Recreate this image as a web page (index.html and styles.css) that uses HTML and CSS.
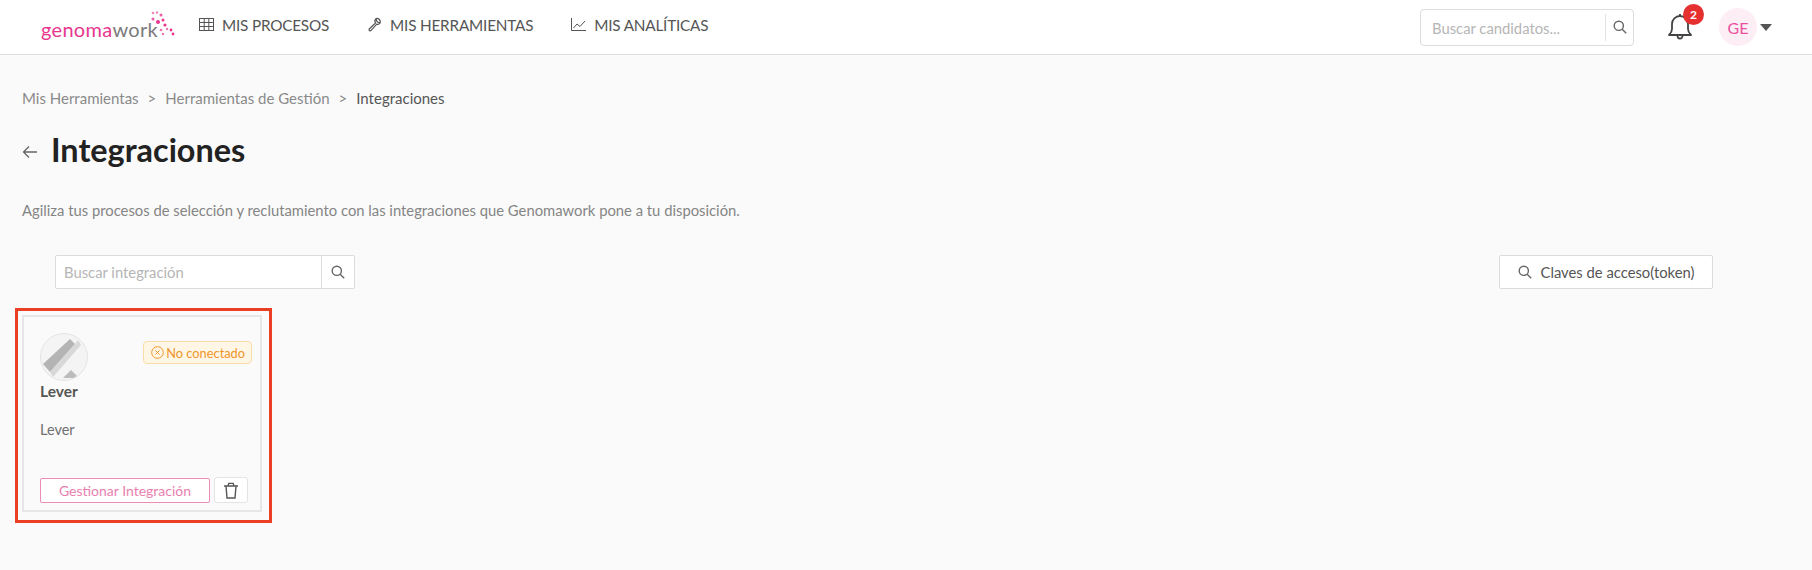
FILE: index.html
```html
<!doctype html>
<html lang="es">
  <head>
    <meta charset="UTF-8" />
    <title>Integraciones</title>
    <link rel="stylesheet" href="styles.css">
  </head>
  <body>
    <header class="topbar">
      <div class="logo">
        <span class="logo-text"><span class="logo-pink">genoma</span>work</span>
        <svg class="logo-dots" width="25" height="26" viewBox="0 0 25 26">
          <g fill="#e8368f">
            <circle cx="3" cy="2" r="1.3" opacity=".6"/><circle cx="7" cy="1.5" r="1.2" opacity=".6"/>
            <circle cx="11" cy="4" r="1.5" opacity=".8"/><circle cx="3" cy="8" r="1.5" opacity=".8"/>
            <circle cx="8" cy="11" r="2"/><circle cx="13" cy="9" r="1.5"/>
            <circle cx="15" cy="14" r="1.6"/><circle cx="11" cy="19" r="1.3" opacity=".7"/>
            <circle cx="17" cy="18" r="1.2" opacity=".7"/><circle cx="21" cy="19" r="1.4"/>
            <circle cx="23" cy="23" r="1.4"/><circle cx="13" cy="23" r="1.2" opacity=".7"/>
          </g>
        </svg>
      </div>
      <nav class="main-nav">
        <a class="nav-item" href="#">
          <svg width="15" height="13" viewBox="0 0 15 13" fill="none" stroke="#555" stroke-width="1"><rect x=".5" y=".5" width="14" height="12"/><path d="M.5 4.5h14M.5 8.5h14M5.2.5v12M9.8.5v12"/></svg>
          Mis procesos
        </a>
        <a class="nav-item" href="#">
          <svg width="15" height="15" viewBox="0 0 15 15" fill="none" stroke="#555" stroke-width="1.2"><path d="M9.2 1.5a3.4 3.4 0 0 1 4 4.2l-2-.2-1.6-1.6zM9.2 1.5a3.4 3.4 0 0 0-.6 4.5l-6.4 6a1.2 1.2 0 0 0 1.7 1.6l5.9-6.4a3.4 3.4 0 0 0 3.4-1"/></svg>
          Mis herramientas
        </a>
        <a class="nav-item" href="#">
          <svg width="15" height="13" viewBox="0 0 15 13" fill="none" stroke="#555" stroke-width="1"><path d="M.5 0v12.5H15M2.5 10l3.5-4 3 2.5L14 3"/></svg>
          Mis analíticas
        </a>
      </nav>
      <div class="topbar-right">
        <div class="top-search">
          <span class="top-search-text">Buscar candidatos...</span>
          <span class="top-search-btn">
            <svg class="search-icon" width="14" height="14" viewBox="0 0 14 14"><circle cx="5.8" cy="5.8" r="4.6"/><path d="M9.2 9.2l4 4"/></svg>
          </span>
        </div>
        <div class="bell">
          <svg width="26" height="28" viewBox="0 0 26 28" fill="none" stroke="#444" stroke-width="1.8"><path d="M2 22c2-2 3-3 3-6v-5a8 8 0 0 1 16 0v5c0 3 1 4 3 6z" stroke-linejoin="round"/><path d="M10.5 23a2.5 2.5 0 0 0 5 0"/><path d="M13 3V1"/></svg>
          <span class="bell-badge">2</span>
        </div>
        <div class="user">
          <span class="user-avatar">GE</span>
          <span class="caret"></span>
        </div>
      </div>
    </header>

    <main class="page">
      <div class="breadcrumb">
        <span>Mis Herramientas</span>
        <span class="sep">&gt;</span>
        <span>Herramientas de Gestión</span>
        <span class="sep">&gt;</span>
        <span class="current">Integraciones</span>
      </div>

      <div class="title-row">
        <svg width="16" height="14" viewBox="0 0 16 14" fill="none" stroke="#666" stroke-width="1.3"><path d="M15 7H1.5M7 1.5L1.5 7 7 12.5"/></svg>
        <h1>Integraciones</h1>
      </div>

      <p class="description">Agiliza tus procesos de selección y reclutamiento con las integraciones que Genomawork pone a tu disposición.</p>

      <div class="tools">
        <div class="search">
          <span class="search-text">Buscar integración</span>
          <span class="search-btn">
            <svg class="search-icon" width="14" height="14" viewBox="0 0 14 14"><circle cx="5.8" cy="5.8" r="4.6"/><path d="M9.2 9.2l4 4"/></svg>
          </span>
        </div>
        <button class="token-button">
          <svg class="search-icon" width="14" height="14" viewBox="0 0 14 14"><circle cx="5.8" cy="5.8" r="4.6"/><path d="M9.2 9.2l4 4"/></svg>
          Claves de acceso(token)
        </button>
      </div>

      <div class="highlight">
        <div class="card">
          <div class="card-top">
            <div class="card-logo">
              <svg width="48" height="48" viewBox="0 0 48 48">
                <defs><clipPath id="logo-clip"><circle cx="24" cy="24" r="23"/></clipPath></defs>
                <circle cx="24" cy="24" r="23.5" fill="#f4f4f4" stroke="#e4e4e4"/>
                <g clip-path="url(#logo-clip)">
                  <path d="M3 31L30 6l5 5L10 39z" fill="#b4b4b4"/>
                  <path d="M35 11l3-4 3 5L13 44l-3-5z" fill="#d8d8d8"/>
                  <path d="M23 45l8-8 8 8z" fill="#bcbcbc"/>
                </g>
              </svg>
            </div>
            <span class="status">
              <svg width="13" height="13" viewBox="0 0 13 13" fill="none" stroke="#f0952b" stroke-width="1"><circle cx="6.5" cy="6.5" r="5.8"/><path d="M4.4 4.4l4.2 4.2M8.6 4.4l-4.2 4.2"/></svg>
              No conectado
            </span>
          </div>
          <div class="card-name">Lever</div>
          <div class="card-desc">Lever</div>
          <div class="card-actions">
            <button class="manage-button">Gestionar Integración</button>
            <button class="trash-button">
              <svg width="16" height="17" viewBox="0 0 16 17" fill="none" stroke="#555" stroke-width="1.4"><path d="M1 4h14M5 4l.8-2.6h4.4L11 4M3 4l1 12h8l1-12"/></svg>
            </button>
          </div>
        </div>
      </div>
    </main>
  </body>
</html>
```

FILE: styles.css
```css
* {
  margin: 0;
  padding: 0;
  box-sizing: border-box;
  font-family: "Lato", sans-serif;
}
body {
  min-height: 570px;
  background-color: #fafafa;
  color: #666;
  overflow: hidden;
}
.topbar {
  display: flex;
  align-items: center;
  height: 55px;
  padding-left: 41px;
  background-color: #fff;
  border-bottom: 1px solid #dedede;
}
.logo {
  display: flex;
  align-items: flex-end;
  width: 158px;
  height: 36px;
  margin-top: -7px;
}
.logo-text {
  font-size: 20px;
  letter-spacing: 0.3px;
  line-height: 26px;
  color: #7b7b7b;
}
.logo-pink {
  color: #e8368f;
}
.logo-dots {
  margin-left: -8px;
  margin-bottom: 5px;
}
.main-nav {
  display: flex;
  gap: 38px;
  margin-bottom: 5px;
}
.nav-item {
  display: flex;
  align-items: center;
  gap: 8px;
  font-size: 15.3px;
  color: #555;
  letter-spacing: -0.2px;
  text-decoration: none;
  text-transform: uppercase;
}
.topbar-right {
  display: flex;
  align-items: center;
  margin-left: auto;
}
.top-search {
  display: flex;
  align-items: center;
  justify-content: space-between;
  width: 214px;
  height: 37px;
  background-color: #fff;
  border: 1px solid #dcdcdc;
  border-radius: 4px;
}
.top-search-text {
  padding-left: 11px;
  padding-top: 2px;
  font-size: 14.8px;
  color: #b5b5b5;
}
.top-search-btn {
  display: flex;
  align-items: center;
  justify-content: center;
  width: 28px;
  height: 27px;
  border-left: 1px solid #e3e3e3;
}
.search-icon {
  fill: none;
  stroke: #666;
  stroke-width: 1.4;
}
.bell {
  position: relative;
  display: flex;
  margin-left: 33px;
}
.bell-badge {
  position: absolute;
  top: -9px;
  left: 16px;
  width: 21px;
  height: 21px;
  border-radius: 50%;
  background-color: #e5302f;
  color: #fff;
  font-size: 12px;
  font-weight: 700;
  line-height: 21px;
  text-align: center;
}
.user {
  display: flex;
  align-items: center;
  gap: 3px;
  margin-left: 26px;
  margin-right: 40px;
}
.user-avatar {
  display: flex;
  align-items: center;
  justify-content: center;
  width: 38px;
  height: 38px;
  border-radius: 50%;
  background-color: #fdeef6;
  color: #e8509f;
  font-size: 16px;
}
.caret {
  width: 0;
  height: 0;
  border-left: 6.5px solid transparent;
  border-right: 6.5px solid transparent;
  border-top: 7px solid #555;
}
.page {
  padding: 34px 0 0 22px;
}
.breadcrumb {
  display: flex;
  gap: 9px;
  font-size: 15px;
  line-height: 18px;
  color: #8a8a8a;
}
.breadcrumb .current {
  color: #555;
}
.title-row {
  display: flex;
  align-items: center;
  gap: 13px;
  margin-top: 23px;
}
.title-row svg {
  margin-top: 4px;
}
.title-row h1 {
  font-size: 32.4px;
  font-weight: 700;
  line-height: 40px;
  color: #222;
}
.description {
  margin-top: 31px;
  font-size: 14.8px;
  line-height: 18px;
  color: #858585;
}
.tools {
  display: flex;
  align-items: center;
  justify-content: space-between;
  margin-top: 36px;
  padding-left: 33px;
  padding-right: 99px;
}
.search {
  display: flex;
  width: 300px;
  height: 34px;
  background-color: #fff;
  border: 1px solid #dcdcdc;
  border-radius: 2px;
}
.search-text {
  flex: 1;
  padding-left: 8px;
  font-size: 14.8px;
  line-height: 32px;
  color: #b5b5b5;
}
.search-btn {
  display: flex;
  align-items: center;
  justify-content: center;
  width: 33px;
  border-left: 1px solid #dcdcdc;
}
.token-button {
  display: flex;
  align-items: center;
  justify-content: center;
  gap: 9px;
  width: 214px;
  height: 34px;
  background-color: #fff;
  border: 1px solid #dcdcdc;
  border-radius: 2px;
  font-size: 14.8px;
  color: #555;
}
.highlight {
  width: 257px;
  height: 215px;
  margin-top: 19px;
  margin-left: -7px;
  padding: 4px 7px 8px 4px;
  border: 3px solid #ea3f23;
}
.card {
  display: flex;
  flex-direction: column;
  height: 100%;
  padding: 16px 8px 7px 16px;
  border: 2px solid #e6e6e6;
}
.card-top {
  display: flex;
  align-items: flex-start;
  justify-content: space-between;
}
.card-logo {
  display: flex;
}
.status {
  display: flex;
  align-items: center;
  gap: 2px;
  height: 23px;
  margin-top: 8px;
  padding: 0 6px 0 7px;
  background-color: #fff6e5;
  border: 1px solid #fbdca8;
  border-radius: 4px;
  font-size: 12.8px;
  color: #f0952b;
}
.card-name {
  margin-top: 1px;
  font-size: 15.5px;
  font-weight: 700;
  line-height: 18px;
  color: #555;
}
.card-desc {
  margin-top: 21px;
  font-size: 14.5px;
  line-height: 18px;
  color: #707070;
}
.card-actions {
  display: flex;
  align-items: center;
  gap: 4px;
  margin-top: auto;
}
.manage-button {
  width: 170px;
  height: 25px;
  background-color: #fff;
  border: 1px solid #ee8cb8;
  border-radius: 2px;
  font-size: 14px;
  color: #e87fb0;
}
.trash-button {
  display: flex;
  align-items: center;
  justify-content: center;
  width: 34px;
  height: 26px;
  background-color: #fff;
  border: 1px solid #e4e4e4;
  border-radius: 3px;
}
```
